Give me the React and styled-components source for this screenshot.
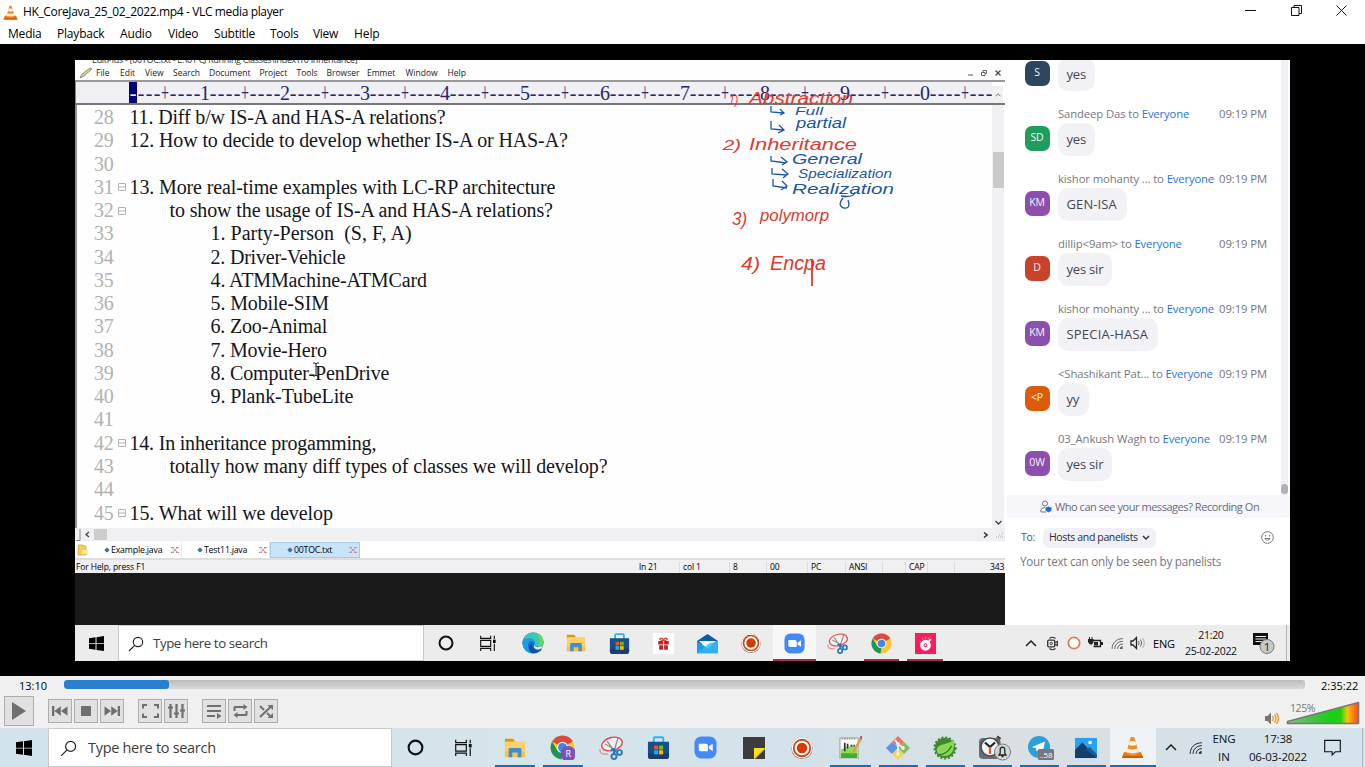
import React from "react";
import styled, { createGlobalStyle, css } from "styled-components";

const ui = '"Open Sans", "Noto Sans", sans-serif';

const Global = createGlobalStyle`
  * { box-sizing: border-box; }
  html, body { margin: 0; padding: 0; overflow: hidden; background: #000; }
  body { font-family: ${ui}; font-size: 12px; color: #000; }
  svg { display: block; flex: none; }
`;

const Window = styled.div`
  width: 1365px; height: 767px; display: flex; flex-direction: column; overflow: hidden;
`;
const Label = styled.span`
  white-space: pre; flex: none;
  letter-spacing: ${p => p.$ls || 0}px;
  font-size: ${p => p.$size || 12}px;
  color: ${p => p.$color || "inherit"};
  line-height: 1;
  font-weight: ${p => p.$weight || 400};
`;

/* ---------- player title and menu ---------- */
const TitleBar = styled.header`
  height: 22px; flex: none; background: #fff; display: flex; align-items: center; padding: 2px 18px 0 3px;
`;
const TitleText = styled(Label)` margin-left: 5px; flex: 1; `;
const WindowButtons = styled.div` display: flex; gap: 34.5px; align-items: center; margin-top: -4px; `;
const PlayerMenu = styled.nav`
  height: 22px; flex: none; background: #fff; display: flex; align-items: center; padding: 1px 0 0 8px;
`;
const MenuItem = styled(Label)` width: ${p => p.$w}px; `;

/* ---------- video ---------- */
const Stage = styled.main`
  height: 632px; flex: none; background: #000; padding: 16px 75px 15px;
`;
const Frame = styled.section`
  width: 1215px; height: 601px; display: flex; flex-direction: column; overflow: hidden; background: #fff;
`;
const Desk = styled.div` display: flex; height: 565px; flex: none; `;

/* ---------- editor ---------- */
const Editor = styled.section`
  width: 930px; position: relative; display: flex; flex-direction: column; background: #1a1a1a;
  overflow: hidden;
`;
const EditorTitle = styled.div`
  height: 6px; background: #fefefe; overflow: hidden; padding-left: 17px; display: flex; align-items: flex-end; flex: none;
`;
const Sliver = styled(Label)` margin-bottom: 2px; line-height: 9px; `;
const EditorMenu = styled.nav`
  height: 14px; flex: none; background: #fefefe; display: flex; align-items: center; padding-left: 4px;
`;
const EditorMenuItem = styled(Label)` width: ${p => p.$w}px; `;
const MdiButtons = styled.div` margin-left: auto; padding-right: 4px; display: flex; gap: 8px; `;
const Ruler = styled.div`
  height: 25px; flex: none; background: #f0eff3; border-top: 2px solid #999; border-bottom: 2px solid #777;
  border-left: 1px solid #888; padding-left: 53px; display: flex; position: relative;
`;
const RulerScale = styled.div`
  display: grid; grid-auto-flow: column; grid-auto-columns: 8px; width: 864px; overflow: hidden;
  font: 20px/22px "Liberation Serif", serif; color: #26266e;
`;
const Tick = styled.span`
  display: flex; justify-content: center; overflow: visible; width: 8px;
  ${p => p.$on && css` background: #00007c; color: #fff; `}
  ${p => p.$cross && css` transform: scale(.7, 1.35); `}
`;
const RulerEnd = styled.div`
  margin-left: auto; width: 13px; background: #f1f0f3; display: flex; justify-content: center; align-items: center;
  border-top: 4px solid #fff; border-right: 2px solid #fff;
`;
const Body = styled.div`
  height: 423px; flex: none; background: #fefefe; display: flex; border-left: 2px solid #929292;
`;
const Lines = styled.div` width: 915px; overflow: hidden; padding-top: 1px; `;
const Line = styled.div`
  display: flex; align-items: center; height: 23.28px; white-space: pre;
  font: 20px/23.28px "Liberation Serif", serif; color: #15151d;
`;
const LineNo = styled.span` width: 41px; padding-left: 17px; color: #b1b1b1; letter-spacing: -.2px; `;
const Fold = styled.span`
  width: 11.500px; display: flex; justify-content: flex-start; height: 8px;
`;
const Code = styled.span`
  padding-left: ${p => p.$in || 0}px; letter-spacing: ${p => p.$ls || 0}px;
`;
const VScroll = styled.div`
  width: 12px; background: #f1f0f3; display: flex; flex-direction: column; align-items: center;
`;
const VThumb = styled.div` width: 11px; height: 36px; margin-top: 47px; background: #cbcaca; `;
const VArrow = styled.div` margin-top: auto; padding-bottom: 3px; `;
const HScroll = styled.div`
  height: 14px; flex: none; background: #f0eff2; display: flex; align-items: center; border-bottom: 1px solid #fafafa;
`;
const HThumb = styled.div` width: 13px; height: 11px; background: #cdcdcd; margin-left: 4px; `;
const HEnd = styled.div` margin-left: auto; display: flex; gap: 8px; align-items: center; padding-right: 2px; `;
const Tabs = styled.div` height: 16px; flex: none; background: #fff; display: flex; align-items: stretch; padding-left: 2px; `;
const Tab = styled.div`
  width: ${p => p.$w}px; display: flex; align-items: center; padding: 0 2px 0 ${p => p.$pl}px; gap: 2px;
  background: ${p => (p.$on ? "#c9e3fb" : "#fff")};
  border: 1px solid ${p => (p.$on ? "#a9c9e4" : "transparent")}; border-right-color: ${p => (p.$on ? "#a9c9e4" : "#e8e8e8")};
`;
const TabDot = styled.i`
  width: 4px; height: 4px; flex: none; background: #3b78a8; transform: rotate(45deg); border-radius: 1px;
`;
const TabClose = styled.div` margin-left: auto; `;
const Status = styled.footer`
  height: 15px; flex: none; background: #f0eff1; border-top: 2px solid #dedede; display: flex; align-items: center; padding: 1px 0 0 1px;
`;
const StatusCell = styled.div`
  width: ${p => p.$w}px; flex: none; height: 11px; padding-left: ${p => p.$pl ?? 3}px; display: flex; align-items: center;
  border-left: ${p => (p.$bare ? "0" : "1px solid #dcdcdc")};
`;
const Ink = styled.svg` position: absolute; left: 640px; top: 24px; `;
const Caret = styled.svg` position: absolute; left: 237px; top: 302px; `;

/* ---------- chat ---------- */
const Chat = styled.aside` width: 285px; background: #fff; display: flex; flex-direction: column; `;
const ChatScroll = styled.div` height: 435px; display: flex; overflow: hidden; flex: none; `;
const Messages = styled.div` width: 276px; padding-left: 19px; margin-top: -19px; `;
const Message = styled.article`
  height: 65px; display: grid; grid-template-columns: 34px 209px; grid-template-rows: 17px 33px; 
`;
const MessageHead = styled.div`
  grid-column: 2; display: flex; justify-content: space-between; align-items: center; color: #76767f; padding-bottom: 2px;
`;
const Avatar = styled.div`
  width: 25px; height: 25px; margin: 2.500px 0 0 .5px; border-radius: 7px; background: ${p => p.$bg}; color: #f3f3f6;
  display: flex; align-items: center; justify-content: center; padding-bottom: 2px;
`;
const Bubble = styled.div`
  justify-self: start; width: ${p => p.$w}px; height: 33px; border-radius: 10px; background: #f2f1f6; color: #46464f;
  display: flex; align-items: center; padding-left: 8.500px;
`;
const ChatRail = styled.div`
  width: 7px; background: #f1f0f5; display: flex; flex-direction: column; justify-content: flex-end; padding-bottom: 1px;
`;
const ChatThumb = styled.div` height: 10px; border-radius: 4px; background: #b1b0b8; `;
const Notice = styled.div`
  height: 23px; background: #f6f6fb; display: flex; align-items: center; padding-left: 33px; gap: 3px; margin-left: 2px; flex: none; color: #6b6b76;
`;
const Recipient = styled.div`
  height: 21px; margin-top: 9px; padding: 0 16px 0 16px; display: flex; align-items: center; color: #55555e; flex: none;
`;
const Picker = styled.div`
  width: 113px; height: 20px; margin-left: 8px; border-radius: 6px; background: #f1f0f6; display: flex; align-items: center; padding-left: 6px; gap: 4px; color: #2c2c38;
`;
const Smile = styled.div` margin-left: auto; `;
const Hint = styled.div` padding: 5px 0 0 15px; color: #77777f; `;

/* ---------- taskbars ---------- */
const Taskbar = styled.footer`
  height: ${p => p.$h}px; flex: none; display: flex; align-items: stretch; background: ${p => p.$bg};
`;
const Cell = styled.div`
  width: ${p => p.$w}px; flex: none; display: flex; align-items: center; justify-content: center;
  padding-left: ${p => p.$pl || 0}px;
  background: ${p => (p.$on ? "rgba(255,255,255,.6)" : "transparent")};
  position: relative;
  &::after {
    content: ""; display: ${p => (p.$bar ? "block" : "none")}; position: absolute; bottom: 0; height: 2px;
    left: ${p => (p.$on ? 0 : p.$in || 4)}px; right: ${p => (p.$on ? 0 : p.$in || 4)}px; background: ${p => p.$bar};
  }
`;
const SearchBox = styled.div`
  width: ${p => p.$w}px; flex: none; background: #fff; border: 1px solid #c9c9c9; display: flex; align-items: center;
  padding: 1px 0 0 ${p => p.$pl}px; gap: ${p => p.$gap}px; color: #3c3c3c;
`;
const Stack = styled.div`
  width: ${p => p.$w}px; flex: none; display: flex; flex-direction: column; align-items: center; justify-content: center; gap: ${p => p.$gap}px; color: #111;
`;
const Spacer = styled.div` width: ${p => p.$w}px; flex: none; `;
const EdgeLine = styled.div` margin-left: auto; width: 1px; background: #a9b3b8; margin-right: ${p => p.$r}px; `;

/* ---------- player controls ---------- */
const Controls = styled.section`
  height: 52px; flex: none; background: #f0f0f0; display: flex; flex-direction: column;
`;
const SeekRow = styled.div` height: 18px; display: flex; align-items: flex-start; padding: 4px 6px 0 0; `;
const Time = styled(Label)` width: 64px; padding: 0 0 0 19px; color: #000; `;
const Total = styled(Label)` padding: 0 0 0 16px; `;
const Track = styled.div`
  width: 1241px; height: 9px; flex: none; border-radius: 3px; overflow: hidden; background: linear-gradient(#bcbcbc, #d9d9d9);
`;
const Progress = styled.div` width: 105px; height: 9px; border-radius: 3px; background: #2a7ed2; `;
const ButtonRow = styled.div` height: 34px; display: flex; align-items: center; padding: 0 5px 0 4px; `;
const Group = styled.div` display: flex; gap: 2px; margin-left: 14px; `;
const ControlButton = styled.button`
  width: ${p => p.$s || 24}px; height: ${p => p.$s || 24}px; padding: 0; border: 1px solid #adadad; background: #e1e1e1;
  display: flex; align-items: center; justify-content: center;
`;
const Volume = styled.div` margin-left: auto; display: flex; align-items: flex-end; gap: 6px; height: 30px; padding-bottom: 1px; `;
const VolumeMeter = styled.div` width: 74px; height: 24px; position: relative; `;
const VolumeText = styled(Label)` position: absolute; left: 4px; top: 2px; color: #777; `;

/* ---------- icons ---------- */
const Svg = ({ s = 22, w, h, vb = "0 0 24 24", children }) => (
  <svg width={w || s} height={h || s} viewBox={vb} fill="none">{children}</svg>
);
const Cone = ({ s }) => (
  <Svg s={s}>
    <path d="M3 17h18l2 6H1z" fill="#e8710a" /><path d="M1.5 21h21l.5 2H1z" fill="#c95800" />
    <path d="M10.3 1h3.4L19 19q-7 3-14 0z" fill="#f58a1f" />
    <path d="M9.1 5.5h5.8l1.2 4q-4 1.6-8.2 0zM6.8 13q5 2 10.4 0l1.2 4q-6.500 2.300-12.800 0z" fill="#f1f1ee" />
  </Svg>
);
const WindowsLogo = ({ s }) => (
  <Svg s={s}><path d="M0 3.500L10.500 2v9.500H0zM12 1.800L24 0v11.500H12zM0 12.700h10.500V22L0 20.500zM12 12.700h12V24l-12-1.800z" fill="#000" /></Svg>
);
const Search = ({ s, c = "#222" }) => (
  <Svg s={s}><circle cx="15" cy="9" r="7" stroke={c} strokeWidth="1.700" /><path d="M10 14L1.500 22.500" stroke={c} strokeWidth="1.700" /></Svg>
);
const Cortana = ({ s }) => <Svg s={s}><circle cx="12" cy="12" r="9.700" stroke="#111" strokeWidth="3" /></Svg>;
const TaskView = ({ s }) => (
  <Svg s={s}><path d="M1 1v4h15V1M1 8h15v9H1zM1 24v-4h15v4M21.500 1v5M21.500 13v11" stroke="#111" strokeWidth="1.700" /><path d="M19.500 7h4v5h-4z" fill="#111" /></Svg>
);
const Folder = ({ s }) => (
  <Svg s={s}><path d="M1 2h9l2 3v3H1z" fill="#d9980b" /><path d="M1 5h22v17H1z" fill="#fdd169" /><path d="M1 16h22v6H1z" fill="#f8c34d" />
    <path d="M5 13.500q0-1.500 1.500-1.500h11q1.500 0 1.500 1.500V22h-4v-5H9v5H5z" fill="#3b8fd2" /></Svg>
);
const Edge = ({ s }) => (
  <Svg s={s}><circle cx="12" cy="12" r="11.500" fill="#1676c6" />
    <path d="M.8 9.500C3 2.500 8.500.3 13 .5c6.500.3 10.500 5 10.500 10 0 3.500-2.500 5.500-6 5.500-2.500 0-3.800-.8-3.500-2 .8-4-2-7-6-6.800C4.500 7.300 2 8.500.8 9.500z" fill="#3cc6b4" />
    <path d="M16 1.200c4.500 1.600 7.500 5.500 7.500 9.300 0 3.500-2.500 5.500-6 5.500 2-3 3-9-1.500-14.800z" fill="#6ad65a" />
    <path d="M8 10c-3 4-1.500 9.500 3 13C4.500 22.500.5 17.500.5 12c0-1 .1-1.700.3-2.500C3 7.500 6 6.800 8 7.200c3.500.2 5.500 2.500 6 5-1.500-2-4-3-6-2.200z" fill="#1b9de2" />
    <path d="M11.500 12c-1.500 4 1.500 8 6 8 1.500 0 3-.5 4.500-1.500-2 3-6.500 5-11 4.500-5.500-4-3.500-10 .5-11z" fill="#124f9c" />
    <path d="M14 13.500c-.7 2 .8 3 3.500 3 2 0 4-.5 5.700-2-.7 2.500-3 4.800-6 4.500-4-.5-5-3.500-3.200-5.500z" fill="#ededee" /></Svg>
);
const Store = ({ s }) => (
  <Svg s={s}><path d="M7 7V2.500Q7 1.300 8.200 1.300h7.600Q17 1.300 17 2.500V7" stroke="#2bb5ee" strokeWidth="2" /><path d="M1 6h22v14.500Q23 24 20 24H4q-3 0-3-3.500z" fill="#15508a" /><path d="M1 18h22v2.500Q23 24 20 24H4q-3 0-3-3.500z" fill="#1b3d6c" />
    <path d="M7.500 10h4.200v4.200H7.500z" fill="#f25022" /><path d="M12.600 10h4.200v4.200h-4.200z" fill="#7fba00" /><path d="M7.500 15h4.200v4.200H7.500z" fill="#28a8ea" /><path d="M12.600 15h4.200v4.200h-4.200z" fill="#ffb900" /></Svg>
);
const Gift = ({ s }) => (
  <Svg s={s}><path d="M0 0h24v24H0z" fill="#fff" /><path d="M6 9h5.500v4H6zM12.700 9H18v4h-5.300zM7 14h4.500v5H7zM12.700 14H17v5h-4.300z" fill="#c22222" />
    <path d="M12 8.500C8 9 7 6.500 8.500 6S12 7 12 8.500C12 7 14 5.500 15.500 6S16 9 12 8.500z" stroke="#e13b2d" strokeWidth="1.300" /></Svg>
);
const Mail = ({ s }) => (
  <Svg s={s}><path d="M0 9l12-8 12 8v4H0z" fill="#0f5aa8" /><path d="M2 9h20l-10 9z" fill="#f4f8fb" /><path d="M0 9l12 8.500L24 9v14H0z" fill="#1b9de8" /><path d="M0 23l14-11L24 9v14z" fill="#35b7f3" opacity=".8" /></Svg>
);
const Record = ({ s }) => (
  <Svg s={s}><circle cx="12" cy="12.500" r="11.500" fill="#777" /><circle cx="12" cy="12" r="11.200" fill="#fff" /><circle cx="12" cy="12" r="9" stroke="#c94913" strokeWidth="2" /><circle cx="12" cy="12" r="5.700" fill="#d43906" /></Svg>
);
const ZoomIcon = ({ s }) => (
  <Svg s={s}><rect x=".5" y=".5" width="23" height="23" rx="7" fill="#4489f8" /><path d="M5 8h7.500q2 0 2 2v6H7q-2 0-2-2zM15.500 11l4-2.800v7.600l-4-2.800z" fill="#fff" /></Svg>
);
const Snip = ({ s }) => (
  <Svg s={s}><ellipse cx="13" cy="8" rx="10.500" ry="6.500" transform="rotate(-15 13 8)" fill="#f7eeee" stroke="#dd4c4c" strokeWidth="1.400" /><path d="M1 13q-1 6 8 5" stroke="#e58d8d" strokeWidth="1.300" />
    <path d="M8 5l8 11M19 2l-4 13M6 8l9 5" stroke="#8a9095" strokeWidth="1.300" /><circle cx="15" cy="20.500" r="2.500" stroke="#2a78b8" strokeWidth="1.900" /><circle cx="20.500" cy="16.500" r="2.400" stroke="#2a78b8" strokeWidth="1.900" /><path d="M12 13l6 3M15 12v6" stroke="#2a78b8" strokeWidth="2" /></Svg>
);
const Chrome = ({ s, badge }) => (
  <Svg s={s}><circle cx="12" cy="12" r="11.500" fill="#f9c935" /><path d="M2 6.300A11.500 11.500 0 0 1 22 6.300L12 12z" fill="#db4b3c" /><path d="M12 6.300h10l-4 0-6 1z" fill="#db4b3c" />
    <path d="M2 6.300l5 8.600 4.900 2.500-1.100 6A11.500 11.500 0 0 1 2 6.300z" fill="#15975a" /><circle cx="12" cy="12" r="5.500" fill="#f3f3f3" /><circle cx="12" cy="12" r="4.300" fill="#4484ee" />
    {badge && <><circle cx="17.500" cy="18" r="7.500" fill="#7b52bd" /><text x="17.500" y="21" fontSize="8.500" textAnchor="middle" fill="#fff" fontFamily="Open Sans">R</text></>}</Svg>
);
const Groove = ({ s }) => (
  <Svg s={s}><path d="M0 0h24v24H0z" fill="#fb1c5b" /><circle cx="12" cy="14" r="4.200" stroke="#fff" strokeWidth="4" /><circle cx="12" cy="14" r="1.200" fill="#fff" /><path d="M14.500 11l3.500-4" stroke="#fff" strokeWidth="1.800" /><path d="M5 9l2 1.500M8 5.500l1 2M12 4v2.500M16 5l-1 2" stroke="#ff9dbb" /></Svg>
);
const Sticky = ({ s }) => <Svg s={s}><path d="M0 0h24v12L12 24H0z" fill="#3c3c3c" /><path d="M12 12h12L12 24z" fill="#ffdf1b" /><path d="M24 13v11H13z" fill="#3c3c3c" /></Svg>;
const Notepad = ({ s }) => (
  <Svg s={s}><path d="M1 2h19v22H1z" fill="#fbfbf6" stroke="#999" /><path d="M2 14q8-5 17-3v12H2z" fill="#8ddc62" /><path d="M2 18h17v5H2z" fill="#3fae2c" /><path d="M3 3h15" stroke="#888" strokeWidth="1.500" strokeDasharray="1.500 1" /><path d="M6 7v9M9 8v5M12 10h2M15 10h1.500" stroke="#333" strokeWidth="1.700" /><path d="M23 2.500l-8 14-1.500 2" stroke="#e29a45" strokeWidth="2.300" /><path d="M24 0l-1.500 3" stroke="#bd5147" strokeWidth="2.500" /></Svg>
);
const GitIcon = ({ s }) => (
  <Svg s={s}><path d="M12 0l6 6-6 6-6-6z" fill="#ee7068" /><path d="M6 6l6 6-6 6-6-6z" fill="#5c94ea" /><path d="M18 6l6 6-6 6-6-6z" fill="#7fbf55" /><path d="M12 12l6 6-6 6-6-6z" fill="#f4d34d" />
    <path d="M9 4l3 4v10M12 8l5 4" stroke="#f0f0f0" strokeWidth="1.800" /><circle cx="12" cy="8" r="1.900" fill="#eee" /><circle cx="17" cy="12" r="1.900" fill="#eee" /><circle cx="12" cy="18" r="1.900" fill="#eee" /></Svg>
);
const Spring = ({ s }) => (
  <Svg s={s}><circle cx="12" cy="12" r="10.200" fill="#3c8a2a" /><circle cx="12" cy="12" r="10.500" stroke="#3c8a2a" strokeWidth="2.200" strokeDasharray="2 1.800" /><path d="M20.500 3.500c2 9-1 16.500-9.500 16.500-5 0-8-3.500-7-7.500C6 7 16 9 20.500 3.500z" fill="#8cd558" /><path d="M4.500 19c6 0 11-3 14-9" stroke="#347e25" strokeWidth="1.500" /></Svg>
);
const Clock = () => (
  <Svg w={34} h={26} vb="0 0 34 26"><rect x="1" y="3" width="21.500" height="21" rx="4" fill="#6a6e72" /><circle cx="12" cy="12" r="9" fill="#f3f4f5" stroke="#4c5053" strokeWidth="1.700" /><path d="M19 1.500l3.500 2.500" stroke="#444" strokeWidth="2.500" /><path d="M7 7.500l5 4.500 5-4.500" stroke="#222" strokeWidth="2.200" /><path d="M12 12v7" stroke="#e15527" strokeWidth="2.200" />
    <circle cx="24.500" cy="17" r="8" fill="#d5d8da" fillOpacity=".92" stroke="#777" /><path d="M21 20h7l-1.200-2v-3.500q0-2-2.300-2.300-2.300.3-2.300 2.300V18zM23.500 21.500h2" stroke="#222" strokeWidth="1.300" /></Svg>
);
const Telegram = () => (
  <Svg w={28} h={26} vb="0 0 28 26"><circle cx="12" cy="12" r="11" fill="#2ba0da" /><path d="M5 12l13-5.500-2.300 11-4-3-2 2-.7-3.300z" fill="#fff" /><rect x="11" y="14" width="16" height="11" rx="1.500" fill="#74787b" /><text x="19" y="22.500" fontSize="8" fill="#fff" textAnchor="middle" fontFamily="Open Sans">..58</text></Svg>
);
const Photos = ({ s }) => <Svg s={s}><path d="M0 1h24v22H0z" fill="#26a3ec" /><path d="M0 14l8-8 16 17H0z" fill="#123f6d" /><path d="M12 14l4-3 8 8v4z" fill="#1d5b96" /><circle cx="16.500" cy="6" r="2" fill="#fff" /></Svg>;
const Chevron = ({ w = 12, h = 7, c = "#222" }) => <Svg w={w} h={h} vb="0 0 12 7"><path d="M1 6l5-5 5 5" stroke={c} strokeWidth="1.500" /></Svg>;
const Wifi = ({ s, c = "#222" }) => (
  <Svg s={s}><path d="M2 22C2 11 10 3 22 3M7 22C7 14 13 8 22 8M12 22c0-5 4-9 10-9" stroke={c} strokeWidth="1.700" /><path d="M16.500 22q0-4.500 5-5v5z" fill={c} /></Svg>
);
const Notification = ({ s }) => <Svg s={s}><path d="M1 2h22v16h-7l-4.500 4.500V18H1z" stroke="#111" strokeWidth="1.600" /></Svg>;
const Meet = () => <Svg w={11} h={15} vb="0 0 11 15"><path d="M2.500 2.500q3-2.500 6 0M2.500 12.500q3 2.500 6 0" stroke="#333" strokeWidth="1.200" /><rect x=".7" y="4.200" width="7" height="6.600" rx="1" stroke="#333" strokeWidth="1.300" /><path d="M8 6.500l2.300-1v4l-2.300-1" stroke="#333" strokeWidth="1.200" /><circle cx="4.200" cy="7.500" r="1.200" stroke="#333" /></Svg>;
const RingTray = () => <Svg s={14}><circle cx="12" cy="12" r="9.700" fill="#fff" stroke="#e27a4c" strokeWidth="3" /></Svg>;
const Battery = () => <Svg w={15} h={12} vb="0 0 15 12"><path d="M4 3.500h8.500v6H5.500" stroke="#222" strokeWidth="1.300" /><path d="M13 5h2v3h-2zM6 5h4v3.500H6zM0 2h5.500v3L4 7.500H2L0 5z" fill="#222" /><path d="M1.500 0v2M4 0v2" stroke="#222" /></Svg>;
const Speaker = () => <Svg w={16} h={14} vb="0 0 16 14"><path d="M1 5h2l3.500-3.500v11L3 9H1z" stroke="#222" strokeWidth="1.300" /><path d="M8.500 5q1.300 2 0 4M10.500 3.500q2.500 3.500 0 7" stroke="#666" /><path d="M12.500 2q3.500 5 0 10" stroke="#aaa" /></Svg>;
const NoticeBadge = () => (
  <Svg w={24} h={23} vb="0 0 24 23"><path d="M1 1h15v12h-3v3l-3-3H1z" fill="#111" /><path d="M3.500 4.500H14M3.500 7H14M3.500 9.500H11" stroke="#eee" strokeWidth="1.100" /><circle cx="15" cy="14.500" r="7" fill="#c9c9c9" stroke="#777" /><text x="15" y="18.800" textAnchor="middle" fontSize="11.500" fill="#222" fontFamily="Open Sans">1</text></Svg>
);
const FoldBox = () => <Svg w={8} h={8} vb="0 0 8 8"><path d="M.5.5h7v7h-7zM.5 4h7" stroke="#b4b4b4" /></Svg>;
const CloseMark = () => <Svg w={8} h={6} vb="0 0 8 6"><path d="M1 .5l6 5M7 .5l-6 5M0 .5h3M5 .5h3M0 5.500h3M5 5.500h3" stroke="#cf9292" /></Svg>;
const Person = () => <Svg w={12} h={13} vb="0 0 12 13"><circle cx="5" cy="3.500" r="2.500" stroke="#777" /><path d="M6 12H1q-1-4 4-4.500" stroke="#777" /><path d="M8.500 6.500l3 1v3l-3 2-3-2v-3z" fill="#1a6cec" /></Svg>;

const g = "#6f6f6f";
const controlIcons = {
  prev: <Svg w={16} h={10} vb="0 0 16 10"><path d="M0 0h2.300v10H0zM2.300 5L8.800.3v9.400zM9 5L15.500.3v9.400z" fill={g} /></Svg>,
  stop: <Svg w={10} h={10} vb="0 0 10 10"><path d="M0 0h10v10H0z" fill={g} /></Svg>,
  next: <Svg w={16} h={10} vb="0 0 16 10"><path d="M16 0h-2.300v10H16zM13.700 5L7.200.3v9.400zM7 5L.5.3v9.400z" fill={g} /></Svg>,
  full: <Svg w={17} h={14} vb="0 0 17 14"><path d="M1 4.500V1h4M12 1h4v3.500M16 9.500V13h-4M5 13H1V9.500" stroke={g} strokeWidth="2" /></Svg>,
  eq: <Svg w={17} h={14} vb="0 0 17 14"><path d="M2.500 0v14M8.500 0v14M14.500 0v14" stroke={g} strokeWidth="2.200" /><path d="M0 2.500h5v2H0zM6 8.500h5v2H6zM12 5.500h5v2h-5z" fill={g} /></Svg>,
  list: <Svg w={15} h={15} vb="0 0 15 15"><path d="M0 2h14M0 7h14M0 12h8" stroke={g} strokeWidth="2" /><path d="M10 9l4.500 3-4.500 3z" fill={g} /></Svg>,
  loop: <Svg w={15} h={14} vb="0 0 15 14"><path d="M1.500 7V3.500Q1.500 3 2 3h9M13.500 7v3.500q0 .5-.5.5H4" stroke={g} strokeWidth="2" /><path d="M10.500 0l4 3-4 3zM4.500 8l-4 3 4 3z" fill={g} /></Svg>,
  shuffle: <Svg w={14} h={13} vb="0 0 14 13"><path d="M1 12L12 1.500M1 1l4 4M8 8l4 4" stroke={g} strokeWidth="2" /><path d="M8.500 0H14v5zM14 13H8.500L14 8z" fill={g} /></Svg>,
};

/* ---------- data ---------- */
const playerMenu = [["Media", 49, -.2], ["Playback", 63, -.2], ["Audio", 48, -.15], ["Video", 46, -.25], ["Subtitle", 56, -.2], ["Tools", 43, -.3], ["View", 41, -.3], ["Help", 40, -.1]];
const editorMenu = [["File", 24], ["Edit", 25], ["View", 28], ["Search", 36], ["Document", 50.5], ["Project", 37], ["Tools", 30], ["Browser", 40.5], ["Emmet", 38.5], ["Window", 42], ["Help", 30]];
const code = [
  [28, "11. Diff b/w IS-A and HAS-A relations?", 0, false, -.15],
  [29, "12. How to decide to develop whether IS-A or HAS-A?"],
  [30, ""],
  [31, "13. More real-time examples with LC-RP architecture", 0, true],
  [32, "to show the usage of IS-A and HAS-A relations?", 40, true],
  [33, "1. Party-Person  (S, F, A)", 81, false, .02],
  [34, "2. Driver-Vehicle", 81, false, -.2],
  [35, "4. ATMMachine-ATMCard", 81],
  [36, "5. Mobile-SIM", 81],
  [37, "6. Zoo-Animal", 81, false, -.17],
  [38, "7. Movie-Hero", 81, false, -.2],
  [39, "8. Computer-PenDrive", 81, false, -.15],
  [40, "9. Plank-TubeLite", 81],
  [41, ""],
  [42, "14. In inheritance progamming,", 0, true, -.2],
  [43, "totally how many diff types of classes we will develop?", 40],
  [44, ""],
  [45, "15. What will we develop", 0, true, -.1],
];
const ruler = Array.from({ length: 108 }, (_, i) => (i % 10 === 9 ? String(((i + 1) / 10) % 10) : i % 10 === 4 ? "+" : "-"));
const status = [["ln 21", 43], ["col 1", 50], ["8", 37], ["00", 41], ["PC", 38], ["ANSI", 37], ["", 23], ["CAP", 22], ["", 27], ["", 36]];
const messages = [
  ["S", "#2d455e", "", "yes", 37, -.2],
  ["SD", "#1f9d5c", "Sandeep Das to ", "yes", 37, -.2],
  ["KM", "#8d4fae", "kishor mohanty ... to ", "GEN-ISA", 69, .1],
  ["D", "#c9432a", "dillip<9am> to ", "yes sir", 54, -.2],
  ["KM", "#8d4fae", "kishor mohanty ... to ", "SPECIA-HASA", 100, .2],
  ["<P", "#dd5c0c", "<Shashikant Pat... to ", "yy", 31, -.2],
  ["0W", "#8d4fae", "03_Ankush Wagh to ", "yes sir", 54, -.2],
];
const red = "#e2382c", blue = "#1c55a6";
/* text, x, baseline, width, colour, size */
const notes = [
  ["1)", 14, 20, 9, red, 13], ["Abstraction", 34, 20, 104, red, 17], ["Full", 80, 31, 28, blue, 11], ["partial", 81, 44, 50, blue, 15],
  ["2)", 8, 66, 18, red, 15], ["Inheritance", 34, 66, 108, red, 17], ["General", 77, 80, 70, blue, 14], ["Specialization", 83, 94, 94, blue, 13], ["Realization", 77, 110, 102, blue, 15],
  ["3)", 17, 141, 15, red, 19], ["polymorp", 45, 137, 69, red, 17], ["4)", 26, 186, 19, red, 19], ["Encpa", 55, 186, 56, red, 20],
];

function EditorPane() {
  return (
    <Editor>
      <EditorTitle><Sliver $size={9} $color="#333" $ls={-.32}>EditPlus - [00TOC.txt - E:\01 CJ Running Classes\Index\10 Inheritance]</Sliver></EditorTitle>
      <EditorMenu>
        <Svg w={14} h={12} vb="0 0 14 12"><path d="M1 11l2-4 8-6 2 1-8 7z" fill="#d9cf9a" stroke="#7f7a50" strokeWidth=".8" /></Svg>
        <Spacer $w={3} />
        {editorMenu.map(([t, w]) => <EditorMenuItem key={t} $w={w} $size={8.5} $color="#222">{t}</EditorMenuItem>)}
        <MdiButtons>
          <Svg w={5} h={6} vb="0 0 5 6"><path d="M0 5h5" stroke="#555" /></Svg>
          <Svg w={6} h={6} vb="0 0 6 6"><path d="M.5 2.500h3.500v3H.5zM2 2V.5h3.500v3H4" stroke="#666" /></Svg>
          <Svg w={6} h={6} vb="0 0 6 6"><path d="M.5.5l5 5M5.500.5l-5 5" stroke="#444" strokeWidth="1.200" /></Svg>
        </MdiButtons>
      </EditorMenu>
      <Ruler>
        <RulerScale>{ruler.map((c, i) => <Tick key={i} $on={i === 0} $cross={c === "+"}>{c}</Tick>)}</RulerScale>
        <RulerEnd><Chevron w={6} h={4} c="#444" /></RulerEnd>
      </Ruler>
      <Body>
        <Lines>
          {code.map(([n, t, indent, fold, ls = -.12]) => (
            <Line key={n}><LineNo>{n}</LineNo><Fold>{fold && <FoldBox />}</Fold><Code $in={indent} $ls={ls}>{t}</Code></Line>
          ))}
        </Lines>
        <VScroll>
          <VThumb />
          <VArrow><Svg w={7} h={5} vb="0 0 7 5"><path d="M.5 1l3 3 3-3" stroke="#444" strokeWidth="1.400" /></Svg></VArrow>
        </VScroll>
      </Body>
      <HScroll>
        <Svg w={15} h={12} vb="0 0 15 12"><path d="M1 11.500h4V0" stroke="#888" /><path d="M14 3l-3 2.500 3 2.500" stroke="#444" strokeWidth="1.300" /></Svg>
        <HThumb />
        <HEnd>
          <Svg w={5} h={6} vb="0 0 5 6"><path d="M1 .5L4 3 1 5.500" stroke="#333" strokeWidth="1.500" /></Svg>
          <Svg w={7} h={7} vb="0 0 7 7"><path d="M0 6h7M3 4h4M6 2h1" stroke="#aaa" strokeDasharray="1 1" /></Svg>
        </HEnd>
      </HScroll>
      <Tabs>
        <Svg w={12} h={14} vb="0 0 12 14"><path d="M1 3h5l1 1h2v9H1z" fill="#f0cf57" stroke="#c5a338" strokeWidth=".7" /><path d="M5 8h6v4H5z" fill="#fce99a" /></Svg>
        <Tab $w={93} $pl={15}><TabDot /><Label $size={8.8} $ls={-.2}>Example.java</Label><TabClose><CloseMark /></TabClose></Tab>
        <Tab $w={88} $pl={15}><TabDot /><Label $size={8.8} $ls={-.25}>Test11.java</Label><TabClose><CloseMark /></TabClose></Tab>
        <Tab $w={90} $pl={17} $on><TabDot /><Label $size={8.8} $ls={-.25}>00TOC.txt</Label><TabClose><CloseMark /></TabClose></Tab>
      </Tabs>
      <Status>
        <StatusCell $w={560} $pl={0} $bare><Label $size={8.5} $ls={-.1}>For Help, press F1</Label></StatusCell>
        {status.map(([t, w], i) => <StatusCell key={i} $w={w} $bare={i === 0}><Label $size={8.5} $ls={-.15}>{t}</Label></StatusCell>)}
        <Label $size={8.5} $ls={-.15}>343</Label>
      </Status>
      <Ink width="270" height="220" viewBox="0 0 270 220" fill="none">
        {notes.map(([t, x, y, w, c, size]) => (
          <text key={t} x={x} y={y} textLength={w} lengthAdjust="spacingAndGlyphs" fill={c} fontSize={size} fontStyle="italic" fontFamily="Liberation Sans">{t}</text>
        ))}
        <path d="M56 22v6l12 1M65 25l4 4-4 2M56 37v8l12 1M64 41l5 5-6 3M56 72v5l15 2M66 73l6 5-5 3M57 84v6l15 1M67 85l6 5-5 4M58 95v7l14 2M67 97l5 5-6 4" stroke={blue} strokeWidth="1.300" />
        <path d="M126 112q13 2 14-4M128 114q-6 8 1 10 7 1 4-8" stroke={blue} strokeWidth="1.300" />
        <path d="M97 175v27" stroke="#f2301f" strokeWidth="1.800" />
      </Ink>
      <Caret width="8" height="15" viewBox="0 0 8 15" fill="none"><path d="M1 1h2l1 1 1-1h2M4 2v11M1 14h2l1-1 1 1h2" stroke="#222" /></Caret>
    </Editor>
  );
}

function ChatPane() {
  return (
    <Chat>
      <ChatScroll>
        <Messages>
          {messages.map(([a, bg, who, text, w, ls], i) => (
            <Message key={i}>
              <MessageHead>
                <Label $size={11.3} $ls={-.11}>{who}<Label $size={11.3} $ls={-.15} $color="#1d75e6">{who && "Everyone"}</Label></Label>
                <Label $size={11.3} $ls={-.1}>{who && "09:19 PM"}</Label>
              </MessageHead>
              <Avatar $bg={bg}><Label $size={10.5} $ls={-.2}>{a}</Label></Avatar>
              <Bubble $w={w}><Label $size={13} $ls={ls}>{text}</Label></Bubble>
            </Message>
          ))}
        </Messages>
        <ChatRail><ChatThumb /></ChatRail>
      </ChatScroll>
      <Notice><Person /><Label $size={11} $ls={-.45}>Who can see your messages? Recording On</Label></Notice>
      <Recipient>
        <Label $size={10.5} $ls={-.3}>To:</Label>
        <Picker><Label $size={10.5} $weight={500} $ls={-.36}>Hosts and panelists</Label><Svg w={8} h={6} vb="0 0 8 6"><path d="M1 1l3 3 3-3" stroke="#333" strokeWidth="1.500" /></Svg></Picker>
        <Smile><Svg w={13} h={13} vb="0 0 13 13"><circle cx="6.500" cy="6.500" r="5.800" stroke="#777" /><path d="M3.800 7.500q2.700 3.500 5.400 0z" stroke="#777" /><path d="M4.500 4v1.500M8.500 4v1.500" stroke="#777" strokeWidth="1.200" /></Svg></Smile>
      </Recipient>
      <Hint><Label $size={11.7} $ls={-.26}>Your text can only be seen by panelists</Label></Hint>
    </Chat>
  );
}

const maroon = "#a72c52", azure = "#0a73c9";

export default function App() {
  return (
    <Window>
      <Global />
      <TitleBar>
        <Cone s={15} />
        <TitleText $size={12} $ls={-.36}>HK_CoreJava_25_02_2022.mp4 - VLC media player</TitleText>
        <WindowButtons>
          <Svg w={11} h={10} vb="0 0 11 10"><path d="M0 5.500h11" stroke="#111" /></Svg>
          <Svg w={11} h={11} vb="0 0 11 11"><path d="M.5 2.500h7.500v8H.5zM3 2.500v-2h7.500v8H8" stroke="#111" /></Svg>
          <Svg w={11} h={11} vb="0 0 11 11"><path d="M.5.5l10 10M10.500.5l-10 10" stroke="#111" /></Svg>
        </WindowButtons>
      </TitleBar>
      <PlayerMenu>{playerMenu.map(([t, w, ls]) => <MenuItem key={t} $w={w} $ls={ls}>{t}</MenuItem>)}</PlayerMenu>

      <Stage>
        <Frame>
          <Desk><EditorPane /><ChatPane /></Desk>
          <Taskbar $h={36} $bg="#ececec">
            <Cell $w={43}><WindowsLogo s={15} /></Cell>
            <SearchBox $w={306} $pl={9} $gap={9}><Search s={16} /><Label $size={13.3} $ls={-.42}>Type here to search</Label></SearchBox>
            <Cell $w={43}><Cortana s={16} /></Cell>
            <Cell $w={42}><TaskView s={16} /></Cell>
            <Spacer $w={2} />
            <Cell $w={43.6}><Edge s={22} /></Cell>
            <Cell $w={43.6}><Folder s={20} /></Cell>
            <Cell $w={43.6}><Store s={21} /></Cell>
            <Cell $w={43.6}><Gift s={21} /></Cell>
            <Cell $w={43.6}><Mail s={21} /></Cell>
            <Cell $w={43.6}><Record s={20} /></Cell>
            <Cell $w={43.6} $on $bar={maroon}><ZoomIcon s={21} /></Cell>
            <Cell $w={43.6}><Snip s={21} /></Cell>
            <Cell $w={43.6} $bar={maroon}><Chrome s={21} /></Cell>
            <Cell $w={43.6} $bar={maroon}><Groove s={21} /></Cell>
            <Spacer $w={73} />
            <Cell $w={22}><Chevron /></Cell>
            <Cell $w={22}><Meet /></Cell>
            <Cell $w={21}><RingTray /></Cell>
            <Cell $w={22}><Battery /></Cell>
            <Cell $w={22}><Wifi s={13} c="#555" /></Cell>
            <Cell $w={18}><Speaker /></Cell>
            <Cell $w={34}><Label $size={11} $ls={-.2}>ENG</Label></Cell>
            <Stack $w={60} $gap={5}><Label $size={10.5} $ls={-.3}>21:20</Label><Label $size={10.5} $ls={-.3}>25-02-2022</Label></Stack>
            <Spacer $w={9} />
            <Cell $w={28}><NoticeBadge /></Cell>
            <EdgeLine $r={3} />
          </Taskbar>
        </Frame>
      </Stage>

      <Controls>
        <SeekRow><Time $size={11}>13:10</Time><Track><Progress /></Track><Total $size={11}>2:35:22</Total></SeekRow>
        <ButtonRow>
          <ControlButton $s={30}><Svg w={14} h={18} vb="0 0 14 18"><path d="M0 0l14 9L0 18z" fill={g} /></Svg></ControlButton>
          <Group>{["prev", "stop", "next"].map(k => <ControlButton key={k}>{controlIcons[k]}</ControlButton>)}</Group>
          <Group>{["full", "eq"].map(k => <ControlButton key={k}>{controlIcons[k]}</ControlButton>)}</Group>
          <Group>{["list", "loop", "shuffle"].map(k => <ControlButton key={k}>{controlIcons[k]}</ControlButton>)}</Group>
          <Volume>
            <Svg w={15} h={13} vb="0 0 15 13"><path d="M0 4h2.500L6 .5v12L2.500 9H0z" fill="#757575" /><path d="M7.500 4q1.500 2.500 0 5M9.500 2.500q3 4 0 8M11.500 1q4 5.500 0 11" stroke="#f39320" strokeWidth="1.300" /></Svg>
            <VolumeMeter>
              <VolumeText $size={10.5} $ls={-.4}>125%</VolumeText>
              <svg width="74" height="24" viewBox="0 0 74 24">
                <defs><linearGradient id="vol"><stop offset="0" stopColor="#7fc97f" /><stop offset=".35" stopColor="#46c146" /><stop offset=".6" stopColor="#18cf18" /><stop offset=".75" stopColor="#23cf10" /><stop offset=".84" stopColor="#f2c811" /><stop offset=".95" stopColor="#ff6a13" /><stop offset="1" stopColor="#ff4f1d" /></linearGradient></defs>
                <path d="M1.500 20.500L72.500 1.500V22.500H1.500z" fill="url(#vol)" stroke="#777" strokeWidth="1.600" strokeLinejoin="round" />
              </svg>
            </VolumeMeter>
          </Volume>
        </ButtonRow>
      </Controls>

      <Taskbar $h={39} $bg="linear-gradient(90deg,#d2e3ec,#d6e5eb 40%,#d3e2ea 60%,#dadfe2 75%,#d5e0e7 85%,#d5e4ed)">
        <Cell $w={48}><WindowsLogo s={16} /></Cell>
        <SearchBox $w={344} $pl={11} $gap={11}><Search s={17} /><Label $size={14.5} $ls={-.3}>Type here to search</Label></SearchBox>
        <Cell $w={47.5}><Cortana s={17} /></Cell>
        <Cell $w={48}><TaskView s={17} /></Cell>
        <Spacer $w={3} />
        <Cell $w={48} $bar={azure}><Folder s={22} /></Cell>
        <Cell $w={48} $bar={azure}><Chrome s={25} badge /></Cell>
        <Cell $w={48}><Snip s={24} /></Cell>
        <Cell $w={47}><Store s={23} /></Cell>
        <Cell $w={48}><ZoomIcon s={23} /></Cell>
        <Cell $w={48}><Sticky s={22} /></Cell>
        <Cell $w={48}><Record s={22} /></Cell>
        <Cell $w={49} $bar={azure}><Notepad s={23} /></Cell>
        <Cell $w={47} $bar={azure}><GitIcon s={24} /></Cell>
        <Cell $w={47} $bar={azure}><Spring s={24} /></Cell>
        <Cell $w={47} $pl={6} $bar={azure}><Clock /></Cell>
        <Cell $w={47} $pl={3} $bar={azure}><Telegram /></Cell>
        <Cell $w={47} $bar={azure}><Photos s={22} /></Cell>
        <Cell $w={46} $on $bar={azure}><Cone s={23} /></Cell>
        <Cell $w={30}><Chevron /></Cell>
        <Cell $w={20}><Wifi s={14} /></Cell>
        <Stack $w={37} $gap={6}><Label $size={11.5} $ls={-.2}>ENG</Label><Label $size={11.5}>IN</Label></Stack>
        <Stack $w={71} $gap={6}><Label $size={11.5} $ls={-.2}>17:38</Label><Label $size={11.5} $ls={-.2}>06-03-2022</Label></Stack>
        <Cell $w={38}><Notification s={17} /></Cell>
        <EdgeLine $r={2} />
      </Taskbar>
    </Window>
  );
}
